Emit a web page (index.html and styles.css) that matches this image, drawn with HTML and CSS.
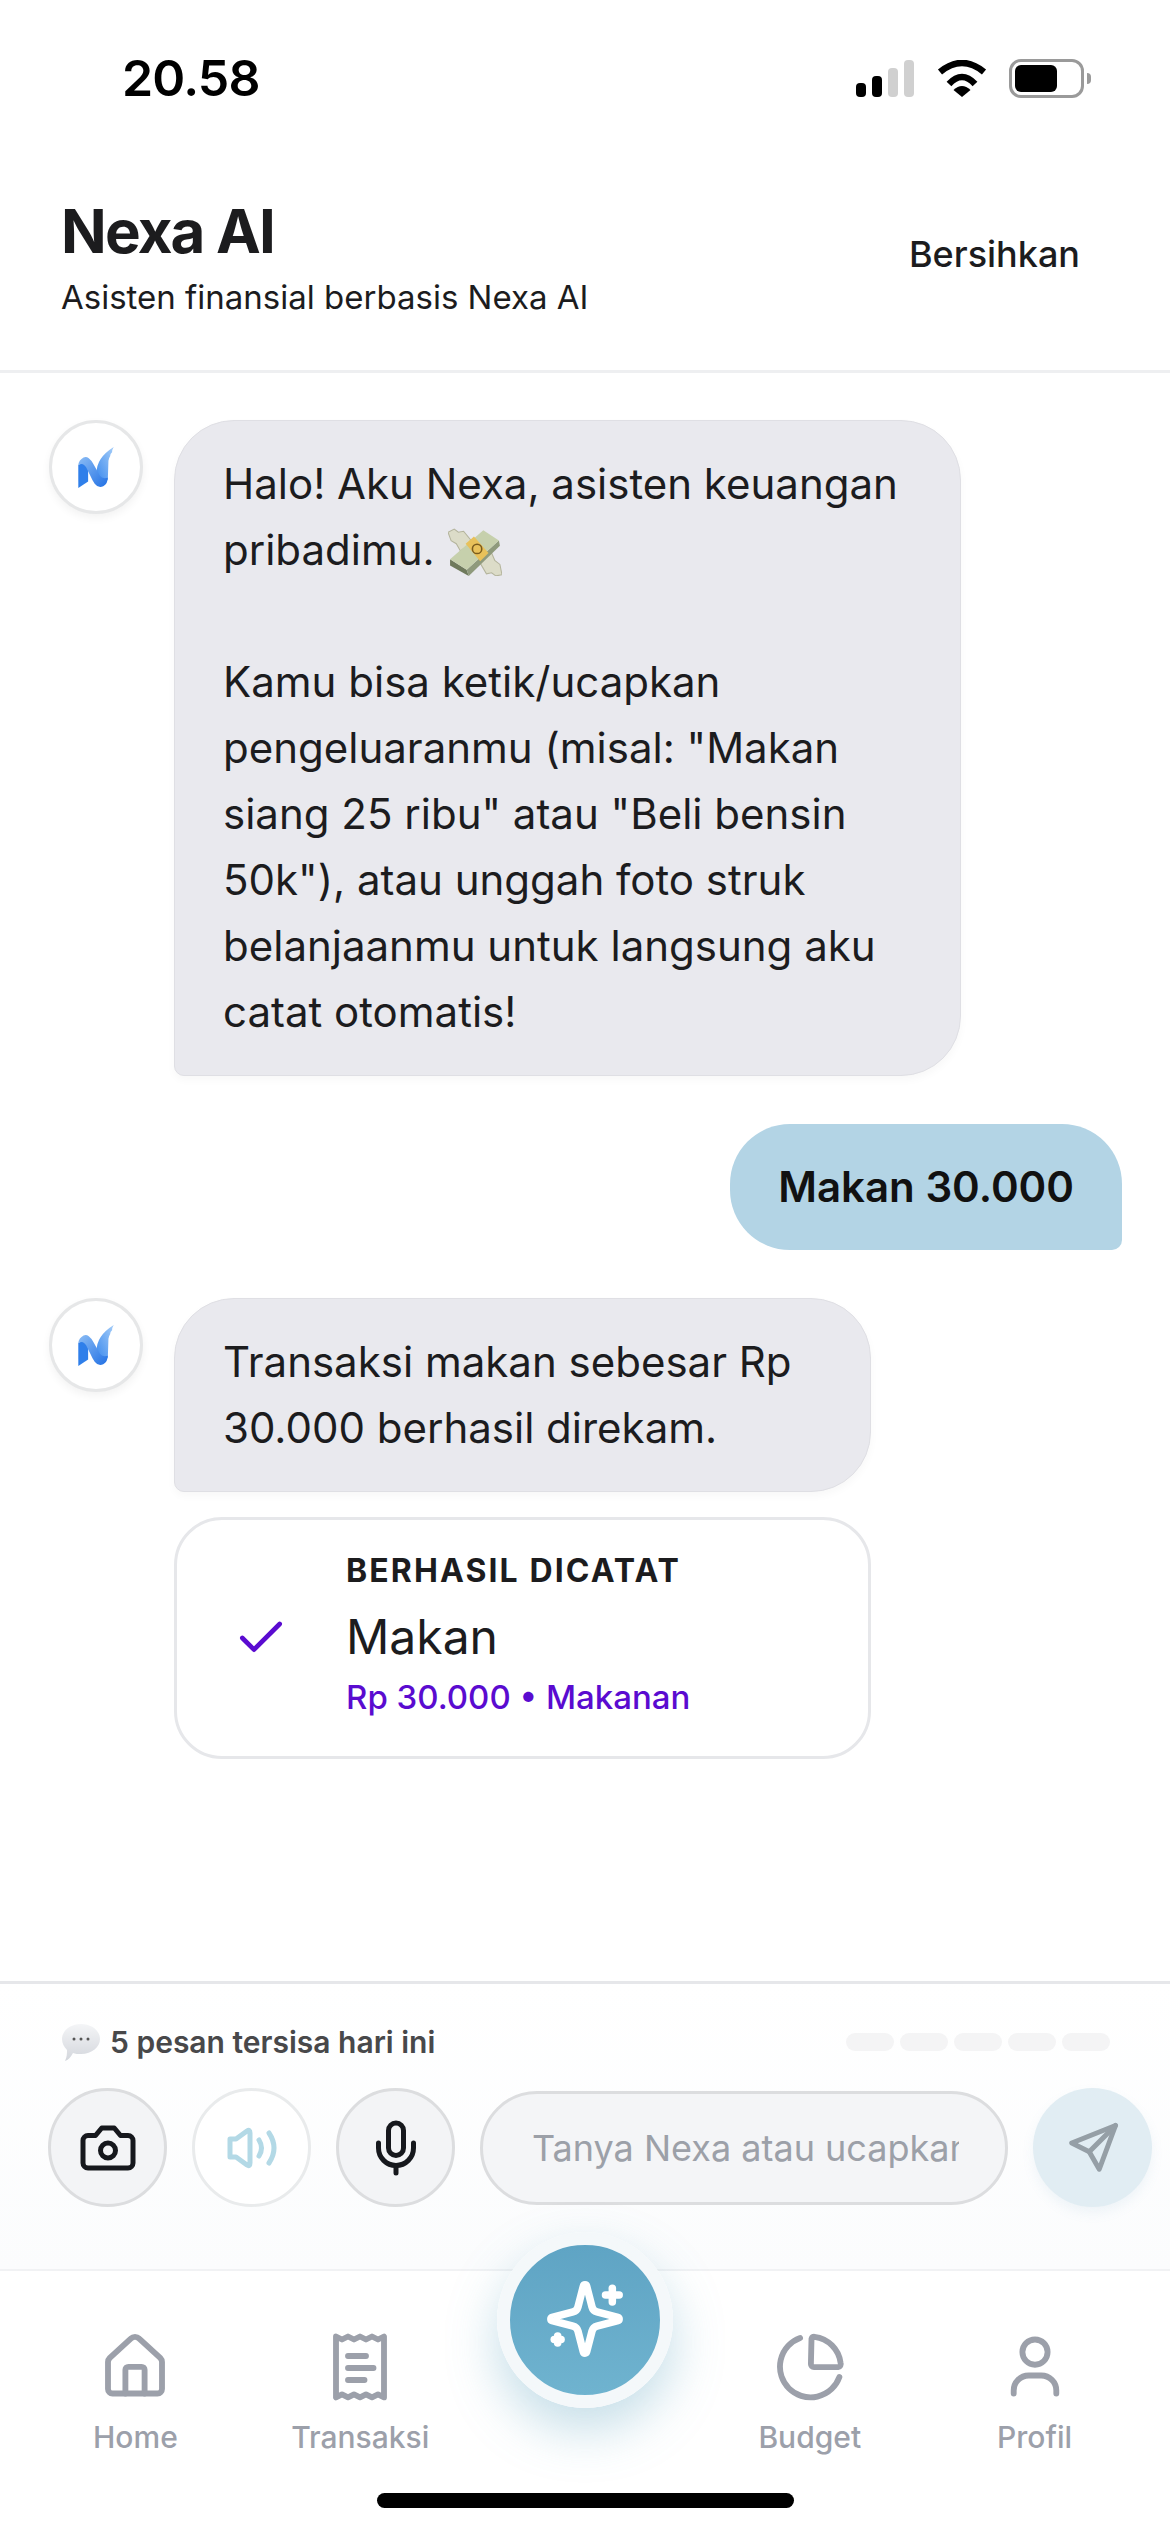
FILE: index.html
```html
<!DOCTYPE html>
<html lang="en">
<head>
    <meta charset="UTF-8">
    <meta name="viewport" content="width=device-width, initial-scale=1.0">
    <title>Nexa AI</title>
    <link rel="stylesheet" href="styles.css">
</head>
<body>
    <main class="page">
        <section class="status-bar">
            <p class="clock">20.58</p>
            <div class="status-icons">
                <div class="signal">
                    <span class="bar bar1"></span>
                    <span class="bar bar2"></span>
                    <span class="bar bar3"></span>
                    <span class="bar bar4"></span>
                </div>
                <svg class="wifi" viewBox="0 0 50 37">
                    <path d="M3 12Q25-6 47 12" fill="none" stroke="#000" stroke-width="6.5"/>
                    <path d="M12 24Q25 10 38 24" fill="none" stroke="#000" stroke-width="6.5"/>
                    <path d="M16.5 30Q25 22 33.5 30L25 37Z" fill="#000"/>
                </svg>
                <div class="battery"><span class="charge"></span></div>
                <span class="nub"></span>
            </div>
        </section>

        <header class="top">
            <div>
                <h1 class="title">Nexa AI</h1>
                <p class="subtitle">Asisten finansial berbasis Nexa AI</p>
            </div>
            <button class="clear" type="button">Bersihkan</button>
        </header>

        <section class="chat">
            <div class="row">
                <div class="avatar">
                    <svg class="logo" viewBox="0 0 108 125">
                        <defs>
                            <linearGradient id="nblue" x1="0" y1="0" x2="1" y2="1">
                                <stop offset="0" stop-color="#8cbdf5"/>
                                <stop offset="1" stop-color="#2170e4"/>
                            </linearGradient>
                            <linearGradient id="nwing" x1="1" y1="0" x2="0" y2="1">
                                <stop offset="0" stop-color="#a5cdf8"/>
                                <stop offset="1" stop-color="#3d8bee"/>
                            </linearGradient>
                        </defs>
                        <path d="M56 80Q54 34 108 0Q103 8 103 16Q97 20 97 28Q93 34 92 42L90 100L70 100Z" fill="url(#nwing)"/>
                        <path d="M0 54L30 44V105L0 125Z" fill="#2f7fea"/>
                        <path d="M0 54Q2 40 16 32Q24 28 32 34Q40 40 46 52L66 88Q72 98 90 94Q90 112 76 120Q60 126 50 112Q42 100 36 86L28 70Q18 46 0 54Z" fill="url(#nblue)"/>
                    </svg>
                </div>
                <div class="bubble bot wide">Halo! Aku Nexa, asisten keuangan
pribadimu. <svg class="emoji-money" viewBox="0 0 52 46">
    <path d="M0 4L6 1L10 4L15 3L24 14L12 22L8 15L3 12Z" fill="#dcdcc8" stroke="#b4b49c" stroke-width="1"/>
    <path d="M52 45L46 46L42 43L37 44L30 32L42 24L45 31L50 35Z" fill="#dcdcc8" stroke="#b4b49c" stroke-width="1"/>
    <path d="M2 30L18 40L20 46L2 36Z" fill="#6f7a5c"/>
    <path d="M18 40L49 12L50 17L20 46Z" fill="#8f9a7c"/>
    <path d="M2 30L34 2L49 12L18 40Z" fill="#c6d0ac"/>
    <path d="M17 15L25 8L39 24L31 32Z" fill="#e8c15a"/>
    <circle cx="28" cy="20" r="4.500" fill="none" stroke="#7a5c1e" stroke-width="1.500"/>
</svg>

Kamu bisa ketik/ucapkan
pengeluaranmu (misal: "Makan
siang 25 ribu" atau "Beli bensin
50k"), atau unggah foto struk
belanjaanmu untuk langsung aku
catat otomatis!</div>
            </div>

            <div class="row right">
                <div class="bubble user">Makan 30.000</div>
            </div>

            <div class="row">
                <div class="avatar">
                    <svg class="logo" viewBox="0 0 108 125">
                        <path d="M56 80Q54 34 108 0Q103 8 103 16Q97 20 97 28Q93 34 92 42L90 100L70 100Z" fill="url(#nwing)"/>
                        <path d="M0 54L30 44V105L0 125Z" fill="#2f7fea"/>
                        <path d="M0 54Q2 40 16 32Q24 28 32 34Q40 40 46 52L66 88Q72 98 90 94Q90 112 76 120Q60 126 50 112Q42 100 36 86L28 70Q18 46 0 54Z" fill="url(#nblue)"/>
                    </svg>
                </div>
                <div class="reply">
                    <div class="bubble bot">Transaksi makan sebesar Rp
30.000 berhasil direkam.</div>
                    <div class="card">
                        <svg class="check" viewBox="0 0 24 24"><path d="M20 6 9 17l-5-5"/></svg>
                        <div>
                            <p class="card-label">BERHASIL DICATAT</p>
                            <p class="card-name">Makan</p>
                            <p class="card-info">Rp 30.000 • Makanan</p>
                        </div>
                    </div>
                </div>
            </div>
        </section>

        <section class="composer">
            <div class="quota">
                <p class="quota-text">
                    <svg class="emoji-talk" viewBox="0 0 38 37">
                        <defs>
                            <linearGradient id="talk" x1="0" y1="0" x2="0" y2="1">
                                <stop offset="0" stop-color="#f4f5f7"/>
                                <stop offset="1" stop-color="#d3d6dc"/>
                            </linearGradient>
                        </defs>
                        <path d="M19 0C30 0 38 7 38 15S30 30 19 30C16 30 13 30 11 29C9 33 6 36 3 37C5 33 5 29 5 26C2 23 0 19 0 15C0 7 8 0 19 0Z" fill="url(#talk)"/>
                        <circle cx="12" cy="15" r="1.500" fill="#555"/>
                        <circle cx="19" cy="15" r="1.500" fill="#555"/>
                        <circle cx="26" cy="15" r="1.500" fill="#555"/>
                    </svg>
                    5 pesan tersisa hari ini
                </p>
                <div class="dots">
                    <span class="dot"></span>
                    <span class="dot"></span>
                    <span class="dot"></span>
                    <span class="dot"></span>
                    <span class="dot"></span>
                </div>
            </div>
            <div class="input-row">
                <button class="round" type="button">
                    <svg class="icon dark" viewBox="0 0 24 24">
                        <path d="M14.5 4h-5L7 7H4a2 2 0 0 0-2 2v9a2 2 0 0 0 2 2h16a2 2 0 0 0 2-2V9a2 2 0 0 0-2-2h-3l-2.500-3z"/>
                        <circle cx="12" cy="13" r="3"/>
                    </svg>
                </button>
                <button class="round light" type="button">
                    <svg class="speaker" viewBox="0 0 60 60">
                        <path d="M8 21H14L25 13Q28 11 28 15V45Q28 49 25 47L14 39H8Z"/>
                        <path d="M37 22Q42 30 37 38"/>
                        <path d="M47 15Q57 30 47 45"/>
                    </svg>
                </button>
                <button class="round" type="button">
                    <svg class="icon dark" viewBox="0 0 24 24">
                        <path d="M12 19v3"/>
                        <path d="M19 10v2a7 7 0 0 1-14 0v-2"/>
                        <rect x="9" y="2" width="6" height="13" rx="3"/>
                    </svg>
                </button>
                <input class="ask" type="text" placeholder="Tanya Nexa atau ucapkan pengeluaran...">
                <button class="round send" type="button">
                    <svg class="icon grey" viewBox="0 0 24 24">
                        <path d="M21 3L3.500 10L10.500 13.500L14.500 20.500Z"/>
                        <path d="M21 3L10.500 13.500"/>
                    </svg>
                </button>
            </div>
        </section>

        <nav class="nav">
            <div class="nav-items">
                <div class="nav-item">
                    <svg class="icon grey" viewBox="0 0 24 24">
                        <path d="M3 11a2 2 0 0 1 .6-1.400L10.600 3.200a2 2 0 0 1 2.800 0L20.400 9.600A2 2 0 0 1 21 11V20a1.500 1.500 0 0 1-1.500 1.500H4.500A1.500 1.500 0 0 1 3 20Z"/>
                        <path d="M8.800 21.500V13.600a1 1 0 0 1 1-1h4.400a1 1 0 0 1 1 1V21.500"/>
                    </svg>
                    <span class="nav-label">Home</span>
                </div>
                <div class="nav-item">
                    <svg class="icon grey" viewBox="0 0 24 24">
                        <path d="M4 2.500L6 3.500L8 2.500L10 3.500L12 2.500L14 3.500L16 2.500L18 3.500L20 2.500V22.800L18 21.800L16 22.800L14 21.800L12 22.800L10 21.800L8 22.800L6 21.800L4 22.800Z"/>
                        <path d="M8 9H14M8 13H16.500M8 17H13.500"/>
                    </svg>
                    <span class="nav-label">Transaksi</span>
                </div>
                <div class="nav-item"></div>
                <div class="nav-item">
                    <svg class="icon grey" viewBox="0 0 24 24">
                        <path d="M8.700 3A10.200 10.200 0 1 0 21.800 16"/>
                        <path d="M12.500 3.300A1 1 0 0 1 13.500 2.600A10 10 0 0 1 22.200 11.300A1 1 0 0 1 21.400 12.700H13.300A1 1 0 0 1 12.300 11.700Z"/>
                    </svg>
                    <span class="nav-label">Budget</span>
                </div>
                <div class="nav-item">
                    <svg class="icon grey" viewBox="0 0 24 24">
                        <circle cx="12" cy="7.700" r="4.200"/>
                        <path d="M4.900 21.500V20.500A5 5 0 0 1 9.900 15.500H14.100A5 5 0 0 1 19.100 20.500V21.500"/>
                    </svg>
                    <span class="nav-label">Profil</span>
                </div>
            </div>
            <div class="fab">
                <svg class="spark" viewBox="0 0 24 24">
                    <path d="M9.937 15.500A2 2 0 0 0 8.500 14.063l-6.135-1.582a.5.5 0 0 1 0-.962L8.500 9.936A2 2 0 0 0 9.937 8.500l1.582-6.135a.5.5 0 0 1 .963 0L14.063 8.500A2 2 0 0 0 15.500 9.937l6.135 1.581a.5.5 0 0 1 0 .964L15.500 14.063a2 2 0 0 0-1.437 1.437l-1.582 6.135a.5.5 0 0 1-.963 0z"/>
                    <path d="M20 3v4"/>
                    <path d="M22 5h-4"/>
                    <path d="M4 17v2"/>
                    <path d="M5 18H3"/>
                </svg>
            </div>
            <div class="home-bar"></div>
        </nav>
    </main>
</body>
</html>
```

FILE: styles.css
```css
*{
    box-sizing: border-box;
}

body{
    margin: 0;
    padding: 0;
    background-color: #ffffff;
    font-family: Inter, "Noto Sans", sans-serif;
    color: #1c1c1e;
}

p, h1{
    margin: 0;
}

.page{
    width: 1170px;
    height: 2532px;
    display: flex;
    flex-direction: column;
    overflow: hidden;
}

/* status bar */
.status-bar{
    height: 156px;
    padding: 0 79px 0 122px;
    display: flex;
    justify-content: space-between;
    align-items: center;
}

.clock{
    font-size: 50px;
    font-weight: 600;
    letter-spacing: -0.8px;
    color: #000000;
}

.status-icons{
    display: flex;
    align-items: center;
}

.signal{
    display: flex;
    align-items: flex-end;
    gap: 6px;
    height: 37px;
    margin-right: 23px;
}

.bar{
    width: 10px;
    border-radius: 4px;
    background-color: #000000;
}

.bar1{
    height: 14px;
}

.bar2{
    height: 21px;
}

.bar3{
    height: 29px;
    background-color: #d0d0d0;
}

.bar4{
    height: 37px;
    background-color: #d0d0d0;
}

.wifi{
    width: 50px;
    height: 37px;
    margin-right: 22px;
}

.battery{
    width: 75px;
    height: 39px;
    padding: 3px;
    border: 3px solid #9a9a9a;
    border-radius: 12px;
}

.charge{
    display: block;
    width: 42px;
    height: 100%;
    border-radius: 6px;
    background-color: #000000;
}

.nub{
    width: 4px;
    height: 11px;
    margin-left: 3px;
    border-radius: 0 4px 4px 0;
    background-color: #9a9a9a;
}

/* header */
.top{
    padding: 39px 90px 51px 61px;
    display: flex;
    justify-content: space-between;
    align-items: center;
    border-bottom: 3px solid #eeeff1;
}

.title{
    font-size: 60px;
    line-height: 72px;
    font-weight: 700;
    letter-spacing: -1.800px;
}

.subtitle{
    margin-top: 8px;
    font-size: 33px;
    line-height: 44px;
}

.clear{
    padding: 0 0 6px 0;
    border: 0;
    background: none;
    font-family: inherit;
    font-size: 36px;
    font-weight: 500;
    color: #1c1c1e;
}

/* chat */
.chat{
    flex: 1;
    padding: 47px 48px 0 49px;
    display: flex;
    flex-direction: column;
    gap: 48px;
}

.row{
    display: flex;
    align-items: flex-start;
    gap: 31px;
}

.right{
    justify-content: flex-end;
}

.avatar{
    width: 94px;
    height: 94px;
    flex-shrink: 0;
    display: flex;
    justify-content: center;
    align-items: center;
    border: 3px solid #e6e7e8;
    border-radius: 50%;
    background-color: #ffffff;
    box-shadow: 0 4px 8px rgba(0, 0, 0, 0.05);
}

.logo{
    width: 36px;
    height: 41px;
}

.bubble{
    padding: 30px 48px;
    font-size: 42px;
    line-height: 66px;
    white-space: pre-line;
}

.bot{
    border: 1px solid #dfdfe4;
    border-radius: 60px 60px 60px 10px;
    background-color: #e9e9ee;
    box-shadow: 0 4px 8px rgba(0, 0, 0, 0.03);
}

.wide{
    width: 787px;
}

.user{
    border-radius: 60px 60px 10px 60px;
    background-color: #b3d4e5;
    font-weight: 600;
    color: #111111;
}

.reply{
    width: 697px;
    display: flex;
    flex-direction: column;
    gap: 25px;
}

.emoji-money{
    width: 54px;
    height: 48px;
    margin-left: 1px;
    vertical-align: -11px;
}

/* saved card */
.card{
    height: 242px;
    padding: 0 56px 8px 56px;
    display: flex;
    align-items: center;
    gap: 57px;
    border: 3px solid #e6e7ea;
    border-radius: 48px;
    background-color: #ffffff;
}

.check{
    width: 56px;
    height: 56px;
    flex-shrink: 0;
    margin-top: 8px;
    fill: none;
    stroke: #5a0bd0;
    stroke-width: 2;
    stroke-linecap: round;
    stroke-linejoin: round;
}

.card-label{
    font-size: 32px;
    line-height: 44px;
    font-weight: 700;
    letter-spacing: 2.100px;
}

.card-name{
    margin-top: 14px;
    font-size: 48px;
    line-height: 60px;
}

.card-info{
    margin-top: 8px;
    font-size: 33px;
    line-height: 44px;
    font-weight: 500;
    color: #5a0bd0;
}

/* composer */
.composer{
    padding: 40px 18px 62px 48px;
    border-top: 3px solid #e6e7ea;
    background: linear-gradient(#ffffff, #fbfcfd);
}

.quota{
    height: 36px;
    padding: 0 42px 0 14px;
    display: flex;
    justify-content: space-between;
    align-items: center;
}

.quota-text{
    display: flex;
    align-items: center;
    gap: 10px;
    font-size: 30px;
    font-weight: 600;
    color: #48484a;
}

.emoji-talk{
    width: 38px;
    height: 37px;
}

.dots{
    display: flex;
    gap: 6px;
}

.dot{
    width: 48px;
    height: 18px;
    border-radius: 9px;
    background-color: #f4f4f5;
}

.input-row{
    margin-top: 28px;
    display: flex;
    align-items: center;
    gap: 25px;
}

.round{
    width: 119px;
    height: 119px;
    flex-shrink: 0;
    padding: 0;
    display: flex;
    justify-content: center;
    align-items: center;
    border: 3px solid #dcdddf;
    border-radius: 50%;
    background-color: #f3f4f6;
}

.light{
    border-color: #e9ebec;
    background-color: #ffffff;
}

.send{
    border: 0;
    background-color: #e1edf3;
    box-shadow: 0 6px 12px rgba(120, 170, 195, 0.1);
}

.icon{
    width: 60px;
    height: 60px;
    fill: none;
    stroke-width: 2;
    stroke-linecap: round;
    stroke-linejoin: round;
}

.dark{
    stroke: #16181d;
}

.grey{
    stroke: #9ca0aa;
}

.send .grey{
    stroke: #959fa6;
}

.speaker{
    width: 60px;
    height: 60px;
    fill: none;
    stroke: #b3d9e6;
    stroke-width: 5;
    stroke-linecap: round;
    stroke-linejoin: round;
}

.ask{
    flex: 1;
    min-width: 0;
    height: 114px;
    padding: 0 46px 0 49px;
    border: 3px solid #dcdddf;
    border-radius: 57px;
    background-color: #f4f5f7;
    font-family: inherit;
    font-size: 36px;
    color: #1c1c1e;
}

.ask::placeholder{
    color: #9ca0a8;
    opacity: 1;
}

/* bottom nav */
.nav{
    position: relative;
    flex-shrink: 0;
    height: 263px;
    padding: 58px 0 0 0;
    border-top: 2px solid #f1f2f4;
    background-color: #ffffff;
}

.nav-items{
    padding: 0 23px;
    display: grid;
    grid-template-columns: repeat(5, 1fr);
}

.nav-item{
    display: flex;
    flex-direction: column;
    align-items: center;
    gap: 18px;
}

.nav .icon{
    width: 72px;
    height: 72px;
    stroke-width: 1.950;
}

.nav-label{
    font-size: 30px;
    line-height: 36px;
    font-weight: 500;
    color: #9ca0aa;
}

.fab{
    position: absolute;
    left: 497px;
    top: -39px;
    width: 176px;
    height: 176px;
    display: flex;
    justify-content: center;
    align-items: center;
    border: 13px solid #f4f8fa;
    border-radius: 50%;
    background: linear-gradient(#5fa4c4, #6fb3cf);
    box-shadow: 0 22px 50px rgba(90, 160, 190, 0.35);
}

.spark{
    width: 82px;
    height: 82px;
    margin-top: -2px;
    fill: none;
    stroke: #ffffff;
    stroke-width: 2.200;
    stroke-linecap: round;
    stroke-linejoin: round;
}

.home-bar{
    width: 417px;
    height: 15px;
    margin: 38px auto 0 auto;
    border-radius: 8px;
    background-color: #000000;
}
```
